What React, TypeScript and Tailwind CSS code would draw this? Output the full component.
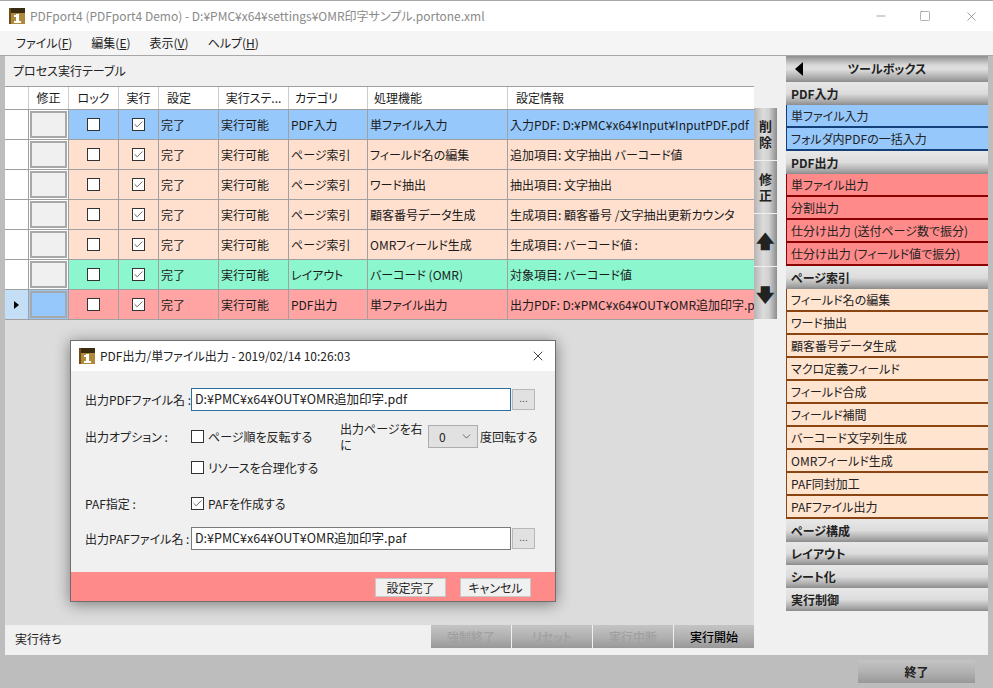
import { Check, ChevronDown, X, Minus, Square } from "lucide-react";

const font =
  "font-['Noto_Sans_CJK_JP','Noto_Sans',sans-serif] [font-feature-settings:'palt']";

const rows = [
  { bg: "bg-[#96c8fc]", cat: "PDF入力", fn: "単ファイル入力", info: "入力PDF: D:¥PMC¥x64¥Input¥InputPDF.pdf" },
  { bg: "bg-[#ffe0cf]", cat: "ページ索引", fn: "フィールド名の編集", info: "追加項目: 文字抽出 バーコード値" },
  { bg: "bg-[#ffe0cf]", cat: "ページ索引", fn: "ワード抽出", info: "抽出項目: 文字抽出" },
  { bg: "bg-[#ffe0cf]", cat: "ページ索引", fn: "顧客番号データ生成", info: "生成項目: 顧客番号 /文字抽出更新カウンタ" },
  { bg: "bg-[#ffe0cf]", cat: "ページ索引", fn: "OMRフィールド生成", info: "生成項目: バーコード値 :" },
  { bg: "bg-[#8cf7cf]", cat: "レイアウト", fn: "バーコード (OMR)", info: "対象項目: バーコード値" },
  { bg: "bg-[#ffa3a3]", cat: "PDF出力", fn: "単ファイル出力", info: "出力PDF: D:¥PMC¥x64¥OUT¥OMR追加印字.p..." },
];

const toolGroups = [
  {
    title: "PDF入力",
    item: "bg-[#96c8fc] border-[#14407a]",
    items: ["単ファイル入力", "フォルダ内PDFの一括入力"],
  },
  {
    title: "PDF出力",
    item: "bg-[#ff8a8a] border-[#8b0000]",
    items: ["単ファイル出力", "分割出力", "仕分け出力 (送付ページ数で振分)", "仕分け出力 (フィールド値で振分)"],
  },
  {
    title: "ページ索引",
    item: "bg-[#ffe4d0] border-[#8b4513]",
    items: [
      "フィールド名の編集",
      "ワード抽出",
      "顧客番号データ生成",
      "マクロ定義フィールド",
      "フィールド合成",
      "フィールド補間",
      "バーコード文字列生成",
      "OMRフィールド生成",
      "PAF同封加工",
      "PAFファイル出力",
    ],
  },
  { title: "ページ構成", item: "", items: [] },
  { title: "レイアウト", item: "", items: [] },
  { title: "シート化", item: "", items: [] },
  { title: "実行制御", item: "", items: [] },
];

const metalV = "bg-[linear-gradient(to_bottom,#c4c4c4,#b0b0b0_55%,#989898)]";
const cell = "flex items-center border-r border-b border-[#a0a0a0] overflow-hidden whitespace-nowrap";

function AppIcon() {
  return (
    <svg width="16" height="16" viewBox="0 0 16 16" className="shrink-0">
      <rect x="0" y="0" width="2" height="16" fill="#6e4e16" />
      <rect x="2" y="0" width="14" height="5" fill="#3a2c10" />
      <rect x="2" y="5" width="14" height="11" fill="#b08a3a" />
      <rect x="7" y="6" width="3" height="8" fill="#fff" />
      <rect x="5" y="7" width="2" height="2" fill="#fff" />
      <rect x="5" y="13" width="7" height="2" fill="#fff" />
    </svg>
  );
}

function CheckBox({ checked }: { checked?: boolean }) {
  return (
    <span className="flex h-[13px] w-[13px] items-center justify-center border border-[#333] bg-white">
      {checked && <Check size={11} strokeWidth={1.6} className="text-[#333]" />}
    </span>
  );
}

function Table() {
  return (
    <div className="ml-0 flex w-[749px] flex-col text-xs text-[#1a1a1a]">
      <div className="grid h-[22px] grid-cols-[24px_40px_50px_40px_60px_70px_79px_140px_246px] border-y border-[#a0a0a0] bg-white box-content">
        <div className="border-r border-[#ccc]" />
        <div className="flex items-center justify-center border-r border-[#ccc]">修正</div>
        <div className="flex items-center justify-center border-r border-[#ccc]">ロック</div>
        <div className="flex items-center justify-center border-r border-[#ccc]">実行</div>
        <div className="flex items-center border-r border-[#ccc] pl-2">設定</div>
        <div className="flex items-center justify-center border-r border-[#ccc]">実行ステ...</div>
        <div className="flex items-center border-r border-[#ccc] pl-1.5">カテゴリ</div>
        <div className="flex items-center border-r border-[#ccc] pl-1.5">処理機能</div>
        <div className="flex items-center pl-2">設定情報</div>
      </div>
      {rows.map((r, i) => {
        const last = i === rows.length - 1;
        return (
          <div key={i} className="grid h-[30px] grid-cols-[24px_40px_50px_40px_60px_70px_79px_140px_246px]">
            <div className={`${cell} justify-center ${last ? "bg-[#c4dff5]" : "bg-white"}`}>
              {last && <span className="h-0 w-0 border-y-[4px] border-l-[5px] border-y-transparent border-l-black" />}
            </div>
            <div className={`${cell} p-px ${last ? "bg-[#96c8fc]" : "bg-white"}`}>
              <div className={`h-full w-full border-2 border-[#a8a8a8] ${last ? "bg-[#96c8fc]" : "bg-[#f0f0f0]"}`} />
            </div>
            <div className={`${cell} justify-center ${r.bg}`}><CheckBox /></div>
            <div className={`${cell} justify-center ${r.bg}`}><CheckBox checked /></div>
            <div className={`${cell} pl-0.5 ${r.bg}`}>完了</div>
            <div className={`${cell} pl-0.5 ${r.bg}`}>実行可能</div>
            <div className={`${cell} pl-0.5 ${r.bg}`}>{r.cat}</div>
            <div className={`${cell} pl-0.5 ${r.bg}`}>{r.fn}</div>
            <div className={`${cell} pl-0.5 border-r-0 ${r.bg}`}>{r.info}</div>
          </div>
        );
      })}
    </div>
  );
}

function SideButton({ children }: { children: React.ReactNode }) {
  return (
    <button
      type="button"
      className="flex h-[52px] w-[23px] items-center justify-center bg-[linear-gradient(to_right,#b4b4b4,#dcdcdc_40%,#d0d0d0_65%,#8c8c8c)] text-[13px] font-bold leading-[16px] text-[#222]"
    >
      {children}
    </button>
  );
}

function ActionButton({ label, enabled }: { label: string; enabled?: boolean }) {
  return (
    <button
      type="button"
      className={`h-[23px] w-[80px] text-xs font-medium ${metalV} ${enabled ? "text-black" : "text-[#a0a0a0]"}`}
    >
      {label}
    </button>
  );
}

function FileRow({ label, value, focused }: { label: string; value: string; focused?: boolean }) {
  return (
    <div className="flex h-[23px] items-center">
      <span className="w-[106px] shrink-0 text-xs whitespace-nowrap">{label}</span>
      <div
        className={`flex h-[23px] w-[320px] items-center border bg-white pl-[3px] text-[12.5px] ${
          focused ? "border-[#2a6f9e]" : "border-[#7a7a7a]"
        }`}
      >
        {value}
      </div>
      <button
        type="button"
        className="ml-px flex h-[21px] w-[23px] items-center justify-center border border-[#b8b8b8] bg-[#e1e1e1] pb-1 text-[10px] text-[#555]"
      >
        ...
      </button>
    </div>
  );
}

function Dialog() {
  return (
    <div className="absolute top-[340px] left-[70px] flex h-[262px] w-[486px] flex-col border border-[#6e6e6e] bg-[#f0f0f0] text-[#222] shadow-[0_2px_14px_rgba(0,0,0,0.45)]">
      <div className="flex h-[30px] shrink-0 items-center bg-white pr-[9px] pl-2">
        <AppIcon />
        <span className="ml-[5px] flex-1 text-xs">PDF出力/単ファイル出力 - 2019/02/14 10:26:03</span>
        <X size={16} strokeWidth={1.2} className="text-[#111]" />
      </div>
      <div className="flex flex-1 flex-col pt-[17px] pl-[14px]">
        <FileRow label="出力PDFファイル名 :" value="D:¥PMC¥x64¥OUT¥OMR追加印字.pdf" focused />
        <div className="mt-[14px] flex h-[23px] items-center text-xs">
          <span className="w-[106px] shrink-0">出力オプション :</span>
          <CheckBox />
          <span className="ml-[4px] w-[132px]">ページ順を反転する</span>
          <span className="w-[88px]">出力ページを右に</span>
          <div className="flex h-[23px] w-[50px] items-center justify-between border border-[#adadad] bg-[#e1e1e1] pr-1 pl-[10px]">
            0
            <ChevronDown size={13} strokeWidth={1.2} />
          </div>
          <span className="ml-0.5">度回転する</span>
        </div>
        <div className="mt-[8px] flex h-[23px] items-center text-xs">
          <span className="w-[106px] shrink-0" />
          <CheckBox />
          <span className="ml-[4px]">リソースを合理化する</span>
        </div>
        <div className="mt-[13px] flex h-[23px] items-center text-xs">
          <span className="w-[106px] shrink-0">PAF指定 :</span>
          <CheckBox checked />
          <span className="ml-[4px]">PAFを作成する</span>
        </div>
        <div className="mt-[12px]">
          <FileRow label="出力PAFファイル名 :" value="D:¥PMC¥x64¥OUT¥OMR追加印字.paf" />
        </div>
      </div>
      <div className="flex h-[29px] shrink-0 items-start justify-end gap-[14px] bg-[#ff8a8a] pt-[6px] pr-[24px]">
        <button type="button" className="h-[19px] w-[71px] border border-[#c8c8c8] bg-[#f0f0f0] text-xs">設定完了</button>
        <button type="button" className="h-[19px] w-[71px] border border-[#c8c8c8] bg-[#f0f0f0] text-xs">キャンセル</button>
      </div>
    </div>
  );
}

function Toolbox() {
  return (
    <div className="flex w-[202px] flex-col text-xs text-[#222]">
      <div className="flex h-[26px] items-center bg-[linear-gradient(to_bottom,#8e8e8e,#d8d8d8_35%,#e0e0e0_50%,#a8a8a8_85%,#8c8c8c)] pl-[9px]">
        <span className="h-0 w-0 border-y-[7px] border-r-[8px] border-y-transparent border-r-black" />
        <span className="flex-1 pr-[17px] text-center font-bold">ツールボックス</span>
      </div>
      {toolGroups.map((g) => (
        <div key={g.title} className="flex flex-col">
          <div className="flex h-[23px] items-center bg-[linear-gradient(to_bottom,#e8e8e8,#dcdcdc_50%,#a8a8a8_85%,#8c8c8c)] pl-[5px] font-bold">
            {g.title}
          </div>
          {g.items.map((it) => (
            <div key={it} className={`flex h-[23px] items-center border-b-2 border-l pl-[4px] whitespace-nowrap ${g.item}`}>
              {it}
            </div>
          ))}
        </div>
      ))}
    </div>
  );
}

export default function App() {
  return (
    <div className={`relative flex h-[688px] w-[993px] flex-col overflow-hidden bg-[#f0f0f0] ${font}`}>
      <div className="flex h-[31px] shrink-0 items-center border-t border-[#a8a8a8] bg-white pl-[9px] text-xs text-[#8a8a8a]">
        <AppIcon />
        <span className="ml-[5px] flex-1">PDFport4 (PDFport4 Demo) - D:¥PMC¥x64¥settings¥OMR印字サンプル.portone.xml</span>
        <Minus size={14} strokeWidth={1} className="mr-[31px] text-[#666]" />
        <Square size={12} strokeWidth={1} className="mr-[33px] text-[#666]" />
        <X size={15} strokeWidth={1} className="mr-[14px] text-[#666]" />
      </div>
      <div className="flex h-[25px] shrink-0 items-center gap-[19px] border-b border-[#a8a8a8] bg-[#f5f5f5] pl-4 text-xs text-[#222]">
        <span>ファイル(<u>F</u>)</span>
        <span>編集(<u>E</u>)</span>
        <span>表示(<u>V</u>)</span>
        <span>ヘルプ(<u>H</u>)</span>
      </div>
      <div className="flex flex-1 border-x-[5px] border-[#bdbdbd]">
        <div className="flex w-[781px] flex-col">
          <div className="flex h-[30px] shrink-0 items-center pl-2 text-xs text-[#222]">プロセス実行テーブル</div>
          <div className="flex">
            <Table />
            <div className="mt-[22px] ml-0 flex flex-col gap-px">
              <SideButton>削<br />除</SideButton>
              <SideButton>修<br />正</SideButton>
              <SideButton><span className="text-[18px]">🡅</span></SideButton>
              <SideButton><span className="text-[18px]">🡇</span></SideButton>
            </div>
          </div>
          <div className="w-[749px] flex-1 bg-[#dcdcdc]" />
          <div className="flex h-[30px] w-[749px] shrink-0 items-start justify-between pl-[10px] text-xs text-[#222]">
            <span className="mt-[6px]">実行待ち</span>
            <div className="flex gap-px">
              <ActionButton label="強制終了" />
              <ActionButton label="リセット" />
              <ActionButton label="実行中断" />
              <ActionButton label="実行開始" enabled />
            </div>
          </div>
        </div>
        <Toolbox />
      </div>
      <div className="flex h-[33px] shrink-0 items-center justify-end bg-[#bdbdbd] pr-[18px]">
        <button type="button" className={`h-[23px] w-[117px] text-xs font-bold text-[#222] ${metalV}`}>終了</button>
      </div>
      <Dialog />
    </div>
  );
}
